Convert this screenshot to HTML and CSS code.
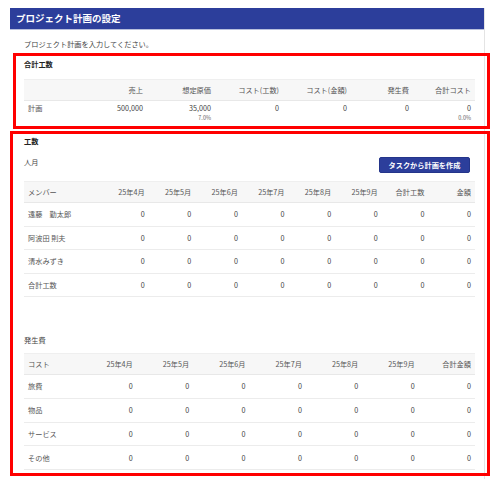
FILE: index.html
```html
<!DOCTYPE html>
<html lang="ja">
<head>
<meta charset="utf-8">
<title>プロジェクト計画の設定</title>
<link rel="stylesheet" href="styles.css">
</head>
<body>
<div class="panel">
  <div class="panel-head">プロジェクト計画の設定</div>
  <div class="panel-body">
    <p class="lead">プロジェクト計画を入力してください。</p>

    <h2 class="sec-title">合計工数</h2>
    <div class="tbl t1">
      <div class="row head">
        <div></div><div class="num">売上</div><div class="num">想定原価</div><div class="num">コスト(工数)</div><div class="num">コスト(金額)</div><div class="num">発生費</div><div class="num">合計コスト</div>
      </div>
      <div class="row data">
        <div class="lbl">計画</div>
        <div class="num"><span class="v">500,000</span></div>
        <div class="num"><span class="v">35,000</span><span class="pct">7.0%</span></div>
        <div class="num"><span class="v">0</span></div>
        <div class="num"><span class="v">0</span></div>
        <div class="num"><span class="v">0</span></div>
        <div class="num"><span class="v">0</span><span class="pct">0.0%</span></div>
      </div>
    </div>

    <h2 class="sec-title s2">工数</h2>
    <div class="sub-row">
      <div class="sub-label">人月</div>
      <button class="btn">タスクから計画を作成</button>
    </div>
    <div class="tbl t2">
      <div class="row head">
        <div>メンバー</div><div class="num">25年4月</div><div class="num">25年5月</div><div class="num">25年6月</div><div class="num">25年7月</div><div class="num">25年8月</div><div class="num">25年9月</div><div class="num">合計工数</div><div class="num">金額</div>
      </div>
      <div class="row body"><div class="lbl">遠藤　勤太郎</div><div class="num">0</div><div class="num">0</div><div class="num">0</div><div class="num">0</div><div class="num">0</div><div class="num">0</div><div class="num">0</div><div class="num">0</div></div>
      <div class="row body"><div class="lbl">阿波田 則夫</div><div class="num">0</div><div class="num">0</div><div class="num">0</div><div class="num">0</div><div class="num">0</div><div class="num">0</div><div class="num">0</div><div class="num">0</div></div>
      <div class="row body"><div class="lbl">清水みずき</div><div class="num">0</div><div class="num">0</div><div class="num">0</div><div class="num">0</div><div class="num">0</div><div class="num">0</div><div class="num">0</div><div class="num">0</div></div>
      <div class="row body"><div class="lbl">合計工数</div><div class="num">0</div><div class="num">0</div><div class="num">0</div><div class="num">0</div><div class="num">0</div><div class="num">0</div><div class="num">0</div><div class="num">0</div></div>
    </div>

    <div class="sub-label s3">発生費</div>
    <div class="tbl t3">
      <div class="row head">
        <div>コスト</div><div class="num">25年4月</div><div class="num">25年5月</div><div class="num">25年6月</div><div class="num">25年7月</div><div class="num">25年8月</div><div class="num">25年9月</div><div class="num">合計金額</div>
      </div>
      <div class="row body"><div class="lbl">旅費</div><div class="num">0</div><div class="num">0</div><div class="num">0</div><div class="num">0</div><div class="num">0</div><div class="num">0</div><div class="num">0</div></div>
      <div class="row body"><div class="lbl">物品</div><div class="num">0</div><div class="num">0</div><div class="num">0</div><div class="num">0</div><div class="num">0</div><div class="num">0</div><div class="num">0</div></div>
      <div class="row body"><div class="lbl">サービス</div><div class="num">0</div><div class="num">0</div><div class="num">0</div><div class="num">0</div><div class="num">0</div><div class="num">0</div><div class="num">0</div></div>
      <div class="row body"><div class="lbl">その他</div><div class="num">0</div><div class="num">0</div><div class="num">0</div><div class="num">0</div><div class="num">0</div><div class="num">0</div><div class="num">0</div></div>
    </div>
  </div>
</div>
<div class="mark mark-1"></div>
<div class="mark mark-2"></div>
</body>
</html>
```

FILE: styles.css
```css
html, body {
  margin: 0;
  padding: 0;
  background: #ffffff;
}
body {
  font-family: "Noto Sans CJK JP", "Noto Sans", sans-serif;
  color: #444;
  font-size: 7.2px;
  position: relative;
  min-height: 479px;
}
.panel {
  margin: 8px 0 0 10px;
  width: 474px;
  border-right: 1px solid #e4e4e4;
  background: #fff;
  min-height: 471px;
}
.panel-head {
  height: 21px;
  line-height: 21px;
  background: #2c3e9b;
  border-bottom: 1px solid #b8bfdc;
  color: #fff;
  font-weight: 700;
  font-size: 9.5px;
  padding-left: 6px;
}
.panel-body {
  padding: 9px 9px 0 14px;
}
.lead {
  margin: 0;
  line-height: 10px;
  color: #444;
}
.sec-title {
  margin: 10px 0 0 0;
  font-size: 7.2px;
  font-weight: 700;
  line-height: 10px;
  color: #222;
}
.tbl {
  margin-top: 10px;
}
.row {
  display: grid;
  align-items: center;
  box-sizing: border-box;
}
.row > div {
  padding: 0 4px;
  white-space: nowrap;
  overflow: hidden;
}
.t1 .row { grid-template-columns: 55px 68px 68px 68px 68px 62px 62px; }
.t2 .row { grid-template-columns: 78px repeat(8, 1fr); }
.t3 .row { grid-template-columns: repeat(8, 1fr); }
.row.head {
  height: 22px;
  background: #f7f7f7;
  border-top: 1px solid #efefef;
  border-bottom: 1px solid #e8e8e8;
  color: #555;
}
.num { text-align: right; }
.lbl { color: #555; }
.row.data {
  height: 24px;
  align-items: start;
  padding-top: 2px;
}
.row.data .num, .row.data .lbl {
  display: flex;
  flex-direction: column;
  align-items: flex-end;
  line-height: 10px;
}
.row.data .lbl { align-items: flex-start; }
.pct {
  font-size: 5.5px;
  line-height: 9px;
  margin-top: 1px;
  color: #666;
}
.row.body {
  height: 23.5px;
  border-bottom: 1px solid #ececec;
  color: #444;
}
.t3 .row.body { height: 23.75px; }
.sec-title.s2 { margin-top: 11px; }
.sub-row {
  display: flex;
  justify-content: space-between;
  align-items: flex-start;
  margin-top: 11px;
  padding-right: 5px;
}
.sub-label {
  line-height: 10px;
  color: #444;
}
.sub-label.s3 { margin-top: 38px; }
.t2 { margin-top: 8px; }
.t3 { margin-top: 8px; }
.btn {
  width: 91px;
  height: 16px;
  padding: 0;
  border: 1px solid #24358a;
  border-radius: 2px;
  background: #2c3e9b;
  color: #fff;
  font-family: inherit;
  font-size: 7.2px;
  font-weight: 700;
  line-height: 14px;
  cursor: pointer;
}
.mark {
  position: absolute;
  border: 3px solid #ff0000;
  box-sizing: border-box;
  pointer-events: none;
}
.mark-1 {
  left: 13px;
  top: 53px;
  width: 477px;
  height: 76px;
}
.mark-2 {
  left: 10px;
  top: 131px;
  width: 480px;
  height: 345px;
}
```
